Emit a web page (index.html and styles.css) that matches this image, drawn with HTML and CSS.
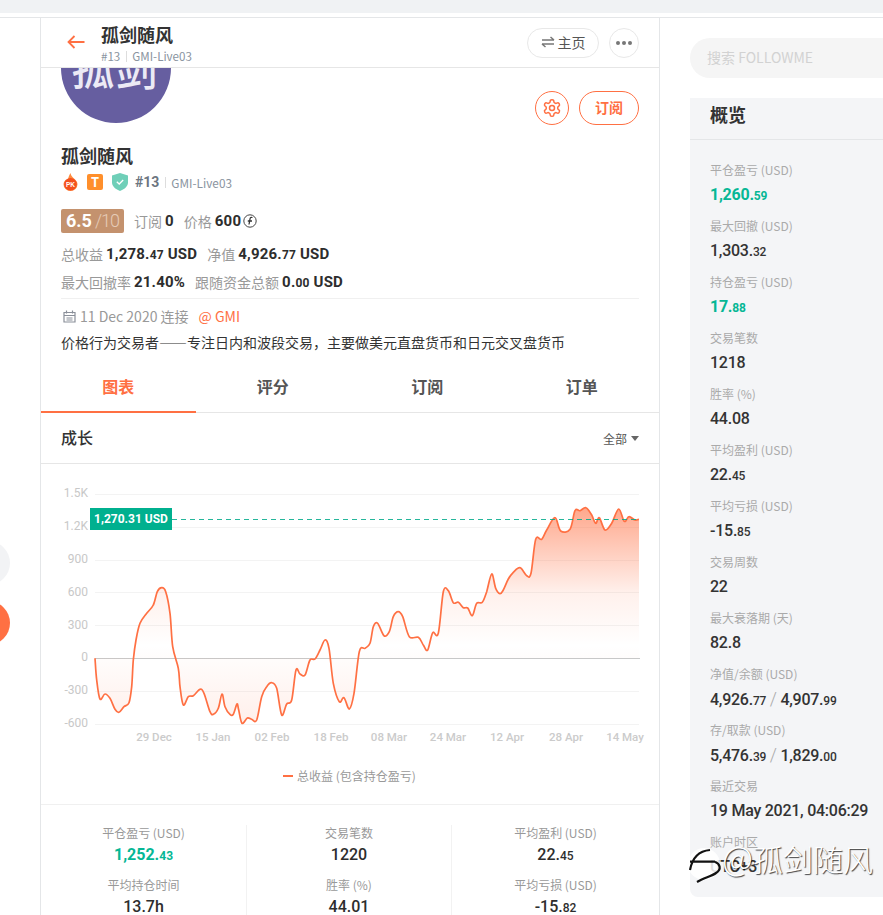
FILE: index.html
```html
<!DOCTYPE html>
<html lang="zh">
<head>
<meta charset="utf-8">
<title>孤剑随风</title>
<link rel="stylesheet" href="styles.css">
</head>
<body>
<div class="top-strip"></div>
<div class="layout">
  <main class="main">
    <header class="head">
      <svg class="back" width="18" height="14" viewBox="0 0 18 14"><path d="M17.500 7H1.500M7.500 1 1.500 7l6 6" fill="none" stroke="#ff7043" stroke-width="1.800"/></svg>
      <div class="head-title">
        <div class="head-name">孤剑随风</div>
        <div class="head-sub"><span>#13</span><i class="sep"></i><span>GMI-Live03</span></div>
      </div>
      <button class="pill-home"><svg width="14" height="12" viewBox="0 0 14 12"><path d="M1 4h12M9.500 1 13 4M13 8H1M4.500 11 1 8" fill="none" stroke="#777" stroke-width="1.500"/></svg>主页</button>
      <button class="round-more"><i></i><i></i><i></i></button>
    </header>

    <section class="profile">
      <div class="profile-top">
        <div class="avatar">孤剑</div>
        <div class="profile-actions">
          <button class="round-gear"><svg width="20" height="20" viewBox="0 0 24 24" fill="none" stroke="#ff7043" stroke-width="1.800"><path d="M12.220 2h-.44a2 2 0 0 0-2 2v.18a2 2 0 0 1-1 1.730l-.43.25a2 2 0 0 1-2 0l-.15-.08a2 2 0 0 0-2.730.73l-.22.38a2 2 0 0 0 .73 2.730l.15.1a2 2 0 0 1 1 1.720v.51a2 2 0 0 1-1 1.740l-.15.09a2 2 0 0 0-.73 2.730l.22.38a2 2 0 0 0 2.730.73l.15-.08a2 2 0 0 1 2 0l.43.25a2 2 0 0 1 1 1.730V20a2 2 0 0 0 2 2h.44a2 2 0 0 0 2-2v-.18a2 2 0 0 1 1-1.730l.43-.25a2 2 0 0 1 2 0l.15.08a2 2 0 0 0 2.730-.73l.22-.39a2 2 0 0 0-.73-2.730l-.15-.08a2 2 0 0 1-1-1.740v-.5a2 2 0 0 1 1-1.740l.15-.09a2 2 0 0 0 .73-2.730l-.22-.38a2 2 0 0 0-2.730-.73l-.15.08a2 2 0 0 1-2 0l-.43-.25a2 2 0 0 1-1-1.730V4a2 2 0 0 0-2-2z"/><circle cx="12" cy="12" r="3"/></svg></button>
          <button class="pill-sub">订阅</button>
        </div>
      </div>
      <h1 class="name">孤剑随风</h1>
      <div class="badges">
        <svg class="b-icon" width="17" height="18" viewBox="0 0 17 18"><path d="M8.500 0C9 3 10.500 4 12 5.500 14 7.500 15.500 9 15.500 11.200A7 6.800 0 0 1 1.500 11.200C1.500 9 3 7.500 4.500 6.500 4.500 8 5 8.500 6 9 5.500 5.500 7 2.500 8.500 0Z" fill="#ff8a3d"/><circle cx="8.500" cy="11.300" r="6.300" fill="#f4511e"/><text x="8.500" y="13.700" class="pk">PK</text></svg>
        <span class="b-t">T</span>
        <svg class="b-icon" width="16" height="18" viewBox="0 0 16 18"><path d="M8 0 16 2.500V9.500C16 13.500 12 16.500 8 18 4 16.500 0 13.500 0 9.500V2.500Z" fill="#6fcfb8"/><path d="M4.800 8.800 7.200 11 11.200 7" fill="none" stroke="#fff" stroke-width="1.300"/></svg>
        <b class="rank">#13</b><i class="sep"></i><span class="server">GMI-Live03</span>
      </div>
      <div class="rating-row">
        <span class="score"><b>6.5</b><span>/10</span></span>
        <span class="lbl">订阅</span><b class="num">0</b>
        <span class="lbl lbl-gap">价格</span><b class="num">600</b>
        <svg class="coin" width="14" height="14" viewBox="0 0 14 14"><circle cx="7" cy="7" r="6.200" fill="none" stroke="#444" stroke-width="1"/><path d="M9.500 3.500C8 3 7.200 3.600 7 5L6 10.500M4.800 7H9" fill="none" stroke="#333" stroke-width="1.300"/></svg>
      </div>
      <div class="kv-row">
        <span class="lbl">总收益</span><b class="num">1,278.<small>47</small> USD</b>
        <span class="lbl lbl-gap">净值</span><b class="num">4,926.<small>77</small> USD</b>
      </div>
      <div class="kv-row kv-row-2">
        <span class="lbl">最大回撤率</span><b class="num">21.40%</b>
        <span class="lbl lbl-gap">跟随资金总额</span><b class="num">0.<small>00</small> USD</b>
      </div>
      <div class="date-row">
        <svg width="13" height="13" viewBox="0 0 13 13"><path d="M1 2.500H12V12H1ZM1 5.500H12M3.500 0.500V3.500M9.500 0.500V3.500M3.500 8H9.500M3.500 10H9.500" fill="none" stroke="#8a8f99" stroke-width="1.200"/></svg>
        <span>11 Dec 2020 连接</span><span class="broker">@ GMI</span>
      </div>
      <p class="desc">价格行为交易者——专注日内和波段交易，主要做美元直盘货币和日元交叉盘货币</p>
    </section>

    <nav class="tabs">
      <a class="tab tab-on">图表</a><a class="tab">评分</a><a class="tab">订阅</a><a class="tab">订单</a>
    </nav>

    <div class="sec-head"><h2>成长</h2><span class="filter">全部<i></i></span></div>

    <svg class="chart" viewBox="41 464 618 340" width="618" height="340">
      <defs>
        <linearGradient id="areaFill" gradientUnits="userSpaceOnUse" x1="0" y1="506" x2="0" y2="724">
          <stop offset="0" stop-color="#ff7043" stop-opacity=".62"/>
          <stop offset=".2" stop-color="#ff7043" stop-opacity=".36"/>
          <stop offset=".4" stop-color="#ff7043" stop-opacity=".1"/>
          <stop offset=".64" stop-color="#ff7043" stop-opacity="0"/>
          <stop offset="1" stop-color="#ff7043" stop-opacity=".11"/>
        </linearGradient>
      </defs>
      <g class="grid">
        <path d="M95 494.500H639M95 527.500H639M95 560.500H639M95 592.500H639M95 625.500H639M95 691.500H639M95 724.500H639"/>
      </g>
      <path class="axis0" d="M95 658.500H640"/>
      <path id="area" class="area" fill="url(#areaFill)"/>
      <path id="line" class="line"/>
      <path class="dash" d="M172 519.500H639"/>
      <g class="ylab">
        <text x="88" y="497">1.5K</text><text x="88" y="530">1.2K</text><text x="88" y="563">900</text><text x="88" y="596">600</text><text x="88" y="629">300</text><text x="88" y="661">0</text><text x="88" y="694">-300</text><text x="88" y="727">-600</text>
      </g>
      <g class="xlab">
        <text x="154" y="741">29 Dec</text><text x="213" y="741">15 Jan</text><text x="272" y="741">02 Feb</text><text x="331" y="741">18 Feb</text><text x="389" y="741">08 Mar</text><text x="448" y="741">24 Mar</text><text x="507" y="741">12 Apr</text><text x="566" y="741">28 Apr</text><text x="625" y="741">14 May</text>
      </g>
      <rect x="90" y="508" width="82" height="22" fill="#00b08f"/>
      <text class="tag" x="131" y="523">1,270.31 USD</text>
      <path d="M283 776H293" stroke="#ff7043" stroke-width="2"/>
      <text class="legend" x="297" y="781">总收益 (包含持仓盈亏)</text>
    </svg>

    <section class="stats">
      <div class="stat-col">
        <div class="stat"><label>平仓盈亏 (USD)</label><b class="up">1,252.<small>43</small></b></div>
        <div class="stat"><label>平均持仓时间</label><b>13.7h</b></div>
      </div>
      <div class="stat-col">
        <div class="stat"><label>交易笔数</label><b>1220</b></div>
        <div class="stat"><label>胜率 (%)</label><b>44.01</b></div>
      </div>
      <div class="stat-col">
        <div class="stat"><label>平均盈利 (USD)</label><b>22.<small>45</small></b></div>
        <div class="stat"><label>平均亏损 (USD)</label><b>-15.<small>82</small></b></div>
      </div>
    </section>
  </main>

  <aside class="side">
    <div class="search">搜索 FOLLOWME</div>
    <div class="panel">
      <h2 class="panel-head">概览</h2>
      <div class="panel-body">
        <div class="item"><label>平仓盈亏 (USD)</label><b class="up">1,260.<small>59</small></b></div>
        <div class="item"><label>最大回撤 (USD)</label><b>1,303.<small>32</small></b></div>
        <div class="item"><label>持仓盈亏 (USD)</label><b class="up">17.<small>88</small></b></div>
        <div class="item"><label>交易笔数</label><b>1218</b></div>
        <div class="item"><label>胜率 (%)</label><b>44.08</b></div>
        <div class="item"><label>平均盈利 (USD)</label><b>22.<small>45</small></b></div>
        <div class="item"><label>平均亏损 (USD)</label><b>-15.<small>85</small></b></div>
        <div class="item"><label>交易周数</label><b>22</b></div>
        <div class="item"><label>最大衰落期 (天)</label><b>82.8</b></div>
        <div class="item"><label>净值/余额 (USD)</label><b>4,926.<small>77</small> <em>/</em> 4,907.<small>99</small></b></div>
        <div class="item"><label>存/取款 (USD)</label><b>5,476.<small>39</small> <em>/</em> 1,829.<small>00</small></b></div>
        <div class="item"><label>最近交易</label><b>19 May 2021, 04:06:29</b></div>
        <div class="item"><label>账户时区</label><b>UTC+3</b></div>
      </div>
    </div>
  </aside>
</div>

<i class="float-grey"></i>
<i class="float-orange"></i>

<div class="watermark">
  <svg class="wm-logo" width="36" height="44" viewBox="0 0 36 44"><circle cx="18" cy="22" r="16" fill="#fff" opacity=".85"/><path d="M4 28C6 17 12 9 24 8M4 19.700H29M29 19.700C34 22 36 27 30 31 26 34 18 36 11 40" fill="none" stroke="#111" stroke-width="2.200"/></svg>
  <span class="wm-text"><span class="wm-at">@</span>孤剑随风</span>
</div>
<script src="chart.js"></script>
</body>
</html>
```
FILE: styles.css
```css
* { box-sizing: border-box; }
html, body { height: 100%; overflow: hidden; }
body {
  margin: 0;
  background: #fff;
  color: #333;
  font-family: "Noto Sans CJK SC", "Noto Sans", sans-serif;
  font-size: 14px;
}
button { font-family: inherit; background: #fff; cursor: pointer; padding: 0; }
h1, h2, p { margin: 0; }
i, em { font-style: normal; }

.top-strip { height: 13px; background: #f0f2f4; margin-bottom: 4px; }
.layout { display: flex; padding-left: 40px; border-top: 1px solid #e4e6e8; }

.main { flex: 0 0 620px; border-left: 1px solid #e4e6e8; border-right: 1px solid #e4e6e8; }

.head {
  height: 50px;
  display: flex;
  align-items: center;
  padding: 0 20px 0 26px;
  border-bottom: 1px solid #e6e6e6;
}
.back { flex: none; margin-top: -1px; }
.head-title { margin-left: 16px; flex: 1; padding-top: 2px; }
.head-name { font-size: 18px; line-height: 24px; font-weight: 700; color: #333; }
.head-sub { display: flex; align-items: center; font-size: 11.600px; line-height: 18px; color: #8a94a0; margin-top: 1px; }
.sep { display: inline-block; width: 1px; height: 11px; background: #ddd; margin: 0 5px 0 6px; }
.pill-home {
  width: 72px; height: 30px; padding-bottom: 2px;
  border: 1px solid #e8e8e8;
  border-radius: 15px;
  font-size: 14px; color: #555;
  display: flex; align-items: center; justify-content: center; gap: 3px;
}
.round-more {
  width: 30px; height: 30px; margin-left: 10px;
  border: 1px solid #e8e8e8; border-radius: 50%;
  display: flex; align-items: center; justify-content: center; gap: 2px;
}
.round-more i { width: 4px; height: 4px; border-radius: 50%; background: #777; }

.profile { padding: 0 20px; overflow: hidden; }
.profile-top { display: flex; justify-content: space-between; }
.avatar {
  width: 110px; height: 110px; margin-top: -55px;
  border-radius: 50%;
  background: #665ea0;
  color: #eceaf5;
  font-size: 43px; font-weight: 500;
  line-height: 108px; text-align: center;
  text-indent: -3px;
  white-space: nowrap;
}
.profile-actions { display: flex; gap: 10px; padding-top: 23px; }
.round-gear {
  width: 34px; height: 34px;
  border: 1px solid #ff7043; border-radius: 50%;
  display: flex; align-items: center; justify-content: center;
}
.pill-sub {
  width: 60px; height: 34px; padding-bottom: 2px;
  border: 1px solid #ff7043; border-radius: 17px;
  color: #ff7043; font-size: 14px; font-weight: 700;
}
.name { font-size: 18px; line-height: 22px; font-weight: 700; margin-top: 19px; }
.badges { display: flex; align-items: center; height: 18px; margin-top: 7px; padding-left: 1px; }
.b-icon { flex: none; }
.pk { font: 700 6.500px "Liberation Sans", sans-serif; fill: #fff; text-anchor: middle; }
.b-t {
  width: 16px; height: 16px; margin: 0 9px 0 8px;
  border-radius: 2px;
  background: #ff8f2b; color: #fff;
  font-size: 13px; font-weight: 700; line-height: 16px; text-align: center;
}
.rank { margin-left: 7px; font-family: Roboto, sans-serif; font-size: 14px; font-weight: 700; color: #6c7580; }
.server { font-size: 11.800px; color: #8a94a0; }

.rating-row { display: flex; align-items: center; height: 24px; margin-top: 18px; }
.score {
  width: 63px; height: 24px; margin-right: 10px;
  border-radius: 2px;
  background: #c4926e;
  text-align: center;
  font-family: Roboto, sans-serif;
  font-size: 18px; line-height: 24px;
}
.score b { color: #fff; font-weight: 700; }
.score span { color: #e6ccb8; margin-left: 3px; font-weight: 300; letter-spacing: -1px; }
.lbl { color: #999; font-size: 14px; }
.lbl-gap { margin-left: 10px; }
.num {
  margin-left: 3px;
  font-family: Roboto, sans-serif;
  font-size: 15px; font-weight: 700;
  color: #2d2d2d;
  letter-spacing: .2px;
}
.num small { font-size: 12px; }
.coin { margin-left: 2px; }
.kv-row { display: flex; align-items: center; height: 22px; margin-top: 10px; }
.kv-row-2 { margin-top: 6px; }
.date-row {
  display: flex; align-items: center;
  height: 29px; margin-top: 5px; padding: 6px 0 0 2px;
  border-top: 1px solid #f0f0f0;
  color: #999; font-size: 14px;
}
.date-row svg { margin-right: 4px; flex: none; }
.broker { margin-left: 10px; color: #ff7043; }
.desc { margin-top: 5px; line-height: 20px; font-size: 14px; color: #333; white-space: nowrap; }

.tabs { display: flex; height: 49px; margin-top: 12px; border-bottom: 1px solid #e6e6e6; }
.tab {
  flex: 1; height: 49px;
  line-height: 44px; text-align: center;
  font-size: 16px; font-weight: 700; color: #555;
}
.tab-on { color: #ff7043; border-bottom: 2px solid #ff7043; }

.sec-head {
  display: flex; align-items: center; justify-content: space-between;
  height: 51px; padding: 0 20px 2px 20px;
  border-bottom: 1px solid #e6e6e6;
}
.sec-head h2 { font-size: 16px; font-weight: 500; color: #333; }
.filter { display: flex; align-items: center; padding-top: 3px; font-size: 12px; color: #555; }
.filter i { margin-left: 4px; border: 4px solid transparent; border-top: 5px solid #666; border-bottom: 0; }

.chart { display: block; }
.grid path { stroke: #f3f3f3; fill: none; }
.axis0 { stroke: #c8c8c8; fill: none; }
.line { fill: none; stroke: #ff7043; stroke-width: 1.700; stroke-linejoin: round; }
.dash { stroke: #00a98a; stroke-dasharray: 5 4; fill: none; opacity: .85; }
.ylab text { font: 12px Roboto, sans-serif; fill: #c8c8c8; text-anchor: end; }
.xlab text { font: 500 11.500px Roboto, sans-serif; fill: #cbcbcb; text-anchor: middle; }
.tag { font: 700 12px Roboto, sans-serif; fill: #fff; text-anchor: middle; }
.legend { font-size: 12px; fill: #999; font-family: "Noto Sans CJK SC", "Noto Sans", sans-serif; }

.stats {
  display: grid; grid-template-columns: 205px 205px 1fr;
  padding-top: 20px;
  border-top: 1px solid #f0f0f0;
}
.stat-col + .stat-col { border-left: 1px solid #f2f2f2; }
.stat { text-align: center; height: 52px; }
.stat label { display: block; line-height: 16px; font-size: 12px; color: #999; }
.stat b {
  display: block; margin-top: 4px;
  font-family: Roboto, sans-serif; font-size: 16px; line-height: 20px; font-weight: 500; color: #2d2d2d;
}
.stat small, .item small { font-size: 12px; }
.up { color: #06b795 !important; font-weight: 700 !important; }

.side { flex: 0 0 193px; margin-left: 30px; padding-top: 20px; }
.search {
  height: 40px; padding-left: 17px;
  border-radius: 20px 0 0 20px;
  background: #f5f5f5;
  color: #d2d2d2; font-size: 14px; line-height: 38px;
}
.panel { margin-top: 20px; height: 799px; background: #f4f5f7; border-radius: 0 0 0 8px; }
.panel-head {
  height: 42px; padding-left: 20px;
  border-bottom: 1px solid #e4e6e8;
  font-size: 18px; font-weight: 700; line-height: 32px; color: #333;
}
.panel-body { padding: 20px 0 0 20px; }
.item { height: 56px; }
.item label { display: block; font-size: 12px; line-height: 20px; color: #aaa; }
.item b {
  display: block; margin-top: 3px;
  font-family: Roboto, sans-serif; font-size: 16px; line-height: 24px; font-weight: 500; color: #333; white-space: nowrap;
  letter-spacing: -.25px;
}
.item em { color: #aaa; font-weight: 300; font-size: 18px; }

.float-grey, .float-orange { position: absolute; left: -34px; width: 44px; height: 44px; border-radius: 50%; }
.float-grey { top: 541px; background: #f2f3f5; }
.float-orange { top: 601px; background: #ff7043; }

.watermark {
  position: absolute; left: 686px; top: 838px;
  display: flex; align-items: flex-start;
  color: #fff;
  font-size: 30px; font-weight: 300; line-height: 38px;
  text-shadow: 1px 1px 1px rgba(0,0,0,.75);
  white-space: nowrap;
}
.wm-logo { margin-top: 4px; }
.wm-at { font-size: 34px; }
```
FILE: chart.js
```js
// Equity curve, read off the plot as [x, y] pairs in page pixels.
var raw = [[285,535],[290,600],[300,657],[315,642],[330,655],[345,688],[357,697],[372,680],[387,668],[395,620],[400,540],[408,480],[420,430],[440,400],[460,375],[472,335],[485,323],[497,335],[510,400],[518,500],[535,565],[540,620],[550,675],[565,650],[580,647],[600,628],[612,640],[630,695],[640,703],[655,685],[666,642],[675,680],[690,703],[700,703],[711,672],[716,690],[726,730],[742,714],[755,718],[770,720],[785,650],[800,620],[815,608],[830,625],[845,705],[860,672],[875,660],[888,570],[900,582],[915,585],[930,540],[945,537],[960,510],[975,480],[987,505],[1000,610],[1018,665]];
var raw2 = [[42,653],[58,687],[72,640],[88,515],[105,505],[120,490],[130,440],[143,430],[162,467],[178,455],[190,410],[205,395],[218,410],[238,470],[265,472],[280,495],[293,510],[308,458],[325,460],[340,335],[355,332],[370,368],[385,367],[400,383],[413,384],[427,407],[440,370],[457,367],[470,335],[485,282],[497,325],[510,341],[520,330],[535,297],[550,277],[570,263],[590,287],[603,280],[617,178],[635,178],[650,150],[675,113],[692,153],[720,148],[735,92],[750,92],[768,83],[785,105],[797,130],[808,113],[825,150],[845,130],[866,87],[883,124],[897,110],[915,120],[927,118]];
var pts = raw.map(function (p) { return [p[0] / 3, 480 + p[1] / 3]; })
  .concat(raw2.map(function (p) { return [330 + p[0] / 3, 480 + p[1] / 3]; }));

function f(n) { return n.toFixed(1); }
var d = 'M' + f(pts[0][0]) + ' ' + f(pts[0][1]);
for (var i = 0; i < pts.length - 1; i++) {
  var a = pts[Math.max(i - 1, 0)], b = pts[i], c = pts[i + 1], e = pts[Math.min(i + 2, pts.length - 1)];
  d += 'C' + f(b[0] + (c[0] - a[0]) / 6) + ' ' + f(b[1] + (c[1] - a[1]) / 6) +
       ' ' + f(c[0] - (e[0] - b[0]) / 6) + ' ' + f(c[1] - (e[1] - b[1]) / 6) +
       ' ' + f(c[0]) + ' ' + f(c[1]);
}
document.getElementById('line').setAttribute('d', d);
document.getElementById('area').setAttribute('d', d + 'L' + f(pts[pts.length - 1][0]) + ' 658L' + f(pts[0][0]) + ' 658Z');
```
